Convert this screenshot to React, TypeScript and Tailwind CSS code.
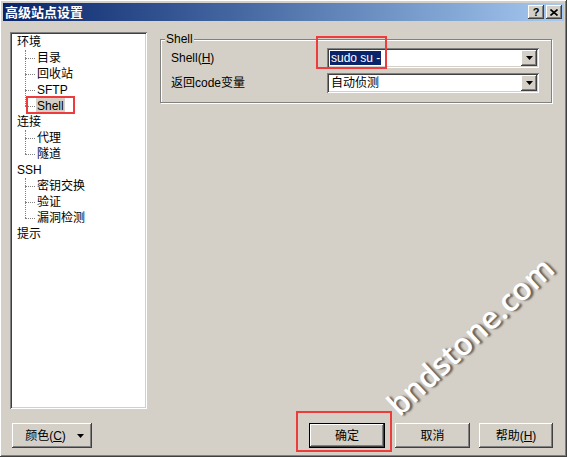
import React from "react";

const raised =
  "shadow-[inset_-1px_-1px_#404040,inset_1px_1px_#ffffff,inset_-2px_-2px_#808080,inset_2px_2px_#d4d0c8]";
const sunken =
  "shadow-[inset_1px_1px_#808080,inset_-1px_-1px_#ffffff,inset_2px_2px_#404040,inset_-2px_-2px_#d4d0c8]";

const tree = [
  { label: "环境", children: ["目录", "回收站", "SFTP", "Shell"] },
  { label: "连接", children: ["代理", "隧道"] },
  { label: "SSH", children: ["密钥交换", "验证", "漏洞检测"] },
  { label: "提示", children: [] as string[] },
];

const ArrowDown = () => (
  <svg width="7" height="4" viewBox="0 0 7 4">
    <path d="M0 0h7L3.5 4z" fill="#000" />
  </svg>
);

const Combo = ({ value, selected }: { value: string; selected?: boolean }) => (
  <div className={`flex h-[20px] w-[212px] items-center bg-white p-[2px] ${sunken}`}>
    <div className="flex-1 pl-[1px]">
      <span className={selected ? "bg-[#0a246a] px-[1px] text-white" : "px-[1px]"}>{value}</span>
    </div>
    <div className={`flex h-[16px] w-[16px] items-center justify-center bg-[#d4d0c8] ${raised}`}>
      <ArrowDown />
    </div>
  </div>
);

const Button = ({
  children,
  width,
  isDefault,
}: {
  children: React.ReactNode;
  width: string;
  isDefault?: boolean;
}) => (
  <div
    className={`flex h-[25px] items-center justify-center bg-[#d4d0c8] ${width} ${
      isDefault
        ? "shadow-[inset_0_0_0_1px_#000,inset_-2px_-2px_#404040,inset_2px_2px_#ffffff,inset_-3px_-3px_#808080]"
        : raised
    }`}
  >
    {children}
  </div>
);

export default function App() {
  return (
    <div
      className={`relative h-[457px] w-[567px] overflow-hidden bg-[#d4d0c8] p-[3px] text-[12px] leading-none text-black ${raised}`}
      style={{ fontFamily: '"Liberation Sans", "Noto Sans CJK SC", sans-serif' }}
    >
      {/* title bar */}
      <div className="flex h-[18px] items-center bg-gradient-to-r from-[#0a246a] to-[#a6caf0] pl-[2px] pr-[2px]">
        <span className="flex-1 text-[13px] font-bold text-white">高级站点设置</span>
        <div className={`flex h-[14px] w-[16px] items-center justify-center bg-[#d4d0c8] text-[11px] font-bold ${raised}`}>
          ?
        </div>
        <div className={`ml-[2px] flex h-[14px] w-[16px] items-center justify-center bg-[#d4d0c8] ${raised}`}>
          <svg width="8" height="7" viewBox="0 0 8 7">
            <path d="M0.5 0.5L7.5 6.5M7.5 0.5L0.5 6.5" stroke="#000" strokeWidth="1.6" />
          </svg>
        </div>
      </div>

      {/* body */}
      <div className="flex pl-[7px] pt-[11px]">
        <div className={`h-[377px] w-[137px] bg-white p-[2px] ${sunken}`}>
          {tree.map((g) => (
            <div key={g.label}>
              <div className="flex h-[16px] items-center pl-[5px]">{g.label}</div>
              {g.children.length > 0 && (
                <div className="relative">
                  <div
                    className="absolute left-[13px] top-0 border-l border-dotted border-[#808080]"
                    style={{ height: (g.children.length - 1) * 16 + 8 }}
                  />
                  {g.children.map((c) => (
                    <div key={c} className="flex h-[16px] items-center pl-[13px]">
                      <div className="w-[10px] border-t border-dotted border-[#808080]" />
                      <span className={`ml-[1px] px-[1px] py-[2px] ${c === "Shell" ? "bg-[#d4d0c8]" : ""}`}>{c}</span>
                    </div>
                  ))}
                </div>
              )}
            </div>
          ))}
        </div>

        <div className="ml-[13px] pt-[7px]">
          <div className="relative h-[64px] w-[392px] border border-[#808080] shadow-[1px_1px_0_#ffffff,inset_1px_1px_0_#ffffff]">
            <span className="absolute left-[4px] top-[-7px] bg-[#d4d0c8] px-[1px]">Shell</span>
            <div className="flex flex-col gap-[5px] pl-[10px] pt-[8px]">
              <div className="flex items-center">
                <span className="w-[156px]">
                  Shell(<span className="underline">H</span>)
                </span>
                <Combo value="sudo su -" selected />
              </div>
              <div className="flex items-center">
                <span className="w-[156px]">返回code变量</span>
                <Combo value="自动侦测" />
              </div>
            </div>
          </div>
        </div>
      </div>

      {/* buttons */}
      <div className="mt-[14px] flex items-center pl-[9px] pr-[11px]">
        <Button width="w-[80px]">
          <span className="ml-[2px] flex-1 text-center">
            颜色(<span className="underline">C</span>)
          </span>
          <span className="mr-[8px]">
            <ArrowDown />
          </span>
        </Button>
        <div className="flex-1" />
        <Button width="w-[76px]" isDefault>
          确定
        </Button>
        <div className="w-[10px]" />
        <Button width="w-[75px]">取消</Button>
        <div className="w-[9px]" />
        <Button width="w-[74px]">
          帮助(<span className="underline">H</span>)
        </Button>
      </div>

      {/* annotations */}
      <div className="absolute left-[26px] top-[96px] h-[18px] w-[49px] border-2 border-[#ee3b3b]" />
      <div className="absolute left-[316px] top-[36px] h-[33px] w-[71px] border-2 border-[#ee3b3b]" />
      <div className="absolute left-[296px] top-[411px] h-[41px] w-[96px] border-2 border-[#ee3b3b]" />

      {/* watermark */}
      <div
        className="absolute left-[470px] top-[336px] -translate-x-1/2 -translate-y-1/2 -rotate-[43deg] whitespace-nowrap text-[31px] font-semibold text-white [text-shadow:2px_2px_2px_rgba(0,0,0,0.55)]"
        style={{ fontFamily: '"Open Sans", sans-serif' }}
      >
        bndstone.com
      </div>
    </div>
  );
}
